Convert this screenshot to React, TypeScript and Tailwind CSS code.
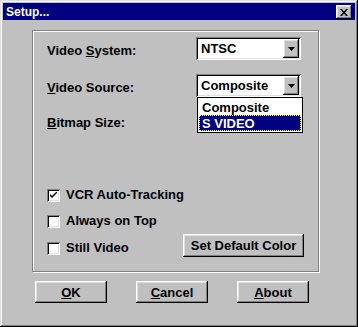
import React from "react";

const FONT = "font-['Liberation_Sans',Arial,sans-serif]";
const RAISED =
  "shadow-[inset_-1px_-1px_0_#000,inset_1px_1px_0_#fff,inset_-2px_-2px_0_#808080,inset_2px_2px_0_#dfdfdf]";
const SUNKEN =
  "shadow-[inset_1px_1px_0_#808080,inset_-1px_-1px_0_#fff,inset_2px_2px_0_#000,inset_-2px_-2px_0_#dfdfdf]";

function ArrowButton() {
  return (
    <div className={`flex h-[19px] w-[16px] items-center justify-center bg-[#c0c0c0] ${RAISED}`}>
      <svg width="7" height="4" viewBox="0 0 7 4">
        <polygon points="0,0 7,0 3.5,4" fill="#000" />
      </svg>
    </div>
  );
}

function Combo({ value, children }: { value: string; children?: React.ReactNode }) {
  return (
    <div className={`relative flex h-[23px] w-[105px] items-center justify-between bg-white pl-[5px] pr-[2px] ${SUNKEN}`}>
      <span className="text-[13px] leading-none">{value}</span>
      <ArrowButton />
      {children}
    </div>
  );
}

function Checkbox({ checked, label }: { checked?: boolean; label: string }) {
  return (
    <div className="flex items-center">
      <div className={`flex h-[13px] w-[13px] items-center justify-center bg-white ${SUNKEN}`}>
        {checked && (
          <svg width="7" height="7" viewBox="0 0 7 7">
            <path d="M0 2 L0 4 L2 6 L7 1 L7 -1 L2 4 Z" fill="#000" />
          </svg>
        )}
      </div>
      <span className="ml-[6px] text-[13px] leading-[16px]">{label}</span>
    </div>
  );
}

function Button({ children, className = "" }: { children: React.ReactNode; className?: string }) {
  return (
    <div
      className={`flex h-[22px] items-center justify-center bg-[#c0c0c0] text-[13px] leading-none ${RAISED} ${className}`}
    >
      {children}
    </div>
  );
}

export default function App() {
  return (
    <div
      className={`flex h-[327px] w-[358px] flex-col bg-[#c0c0c0] p-[3px] font-bold text-black ${FONT} shadow-[inset_-1px_-1px_0_#000,inset_1px_1px_0_#dfdfdf,inset_-2px_-2px_0_#808080,inset_2px_2px_0_#fff]`}
    >
      {/* title bar */}
      <div className="flex h-[17px] items-center justify-between bg-[#000080] pl-[3px] pr-[3px]">
        <span className="text-[12px] leading-none text-white">Setup...</span>
        <div className={`mt-[1px] flex h-[14px] w-[16px] items-center justify-center bg-[#c0c0c0] ${RAISED}`}>
          <svg width="8" height="7" viewBox="0 0 8 7">
            <path d="M0 0h2l2 2.5L6 0h2L5 3.5 8 7H6L4 4.5 2 7H0l3-3.5z" fill="#000" />
          </svg>
        </div>
      </div>

      {/* group box */}
      <div className="ml-[29px] mt-[10px] flex h-[242px] w-[287px] flex-col border border-[#808080] shadow-[1px_1px_0_#fff,inset_1px_1px_0_#fff]">
        <div className="mt-[6px] flex items-start pl-[14px]">
          <span className="mt-[6px] w-[149px] text-[13px] leading-[16px]">
            Video <u>S</u>ystem:
          </span>
          <Combo value="NTSC" />
        </div>
        <div className="relative z-10 mt-[14px] flex items-start pl-[14px]">
          <span className="mt-[6px] w-[149px] text-[13px] leading-[16px]">
            <u>V</u>ideo Source:
          </span>
          <Combo value="Composite">
            <div className="absolute left-[1px] top-[23px] w-[106px] border border-black bg-white p-[1px]">
              <div className="flex h-[16px] items-center pl-[3px] text-[13px] leading-none">Composite</div>
              <div className="flex h-[16px] items-center bg-[#000080] pl-[3px] text-[13px] leading-none text-white outline outline-1 -outline-offset-1 outline-dotted outline-[#ffff80]">
                S&nbsp;VIDEO
              </div>
            </div>
          </Combo>
        </div>
        <div className="mt-[18px] pl-[14px] text-[13px] leading-[16px]">
          <u>B</u>itmap Size:
        </div>

        <div className="mt-[56px] flex flex-col pl-[14px]">
          <Checkbox checked label="VCR Auto-Tracking" />
          <div className="mt-[10px]">
            <Checkbox label="Always on Top" />
          </div>
          <div className="mt-[5px] flex items-center justify-between pr-[14px]">
            <div className="mt-[5px]">
              <Checkbox label="Still Video" />
            </div>
            <Button className="h-[23px] w-[121px]">Set Default Color</Button>
          </div>
        </div>
      </div>

      {/* bottom buttons */}
      <div className="ml-[32px] mt-[9px] flex gap-[29px]">
        <Button className="w-[72px]">
          <u>O</u>K
        </Button>
        <Button className="w-[72px]">
          <u>C</u>ancel
        </Button>
        <Button className="w-[72px]">
          <u>A</u>bout
        </Button>
      </div>
    </div>
  );
}
